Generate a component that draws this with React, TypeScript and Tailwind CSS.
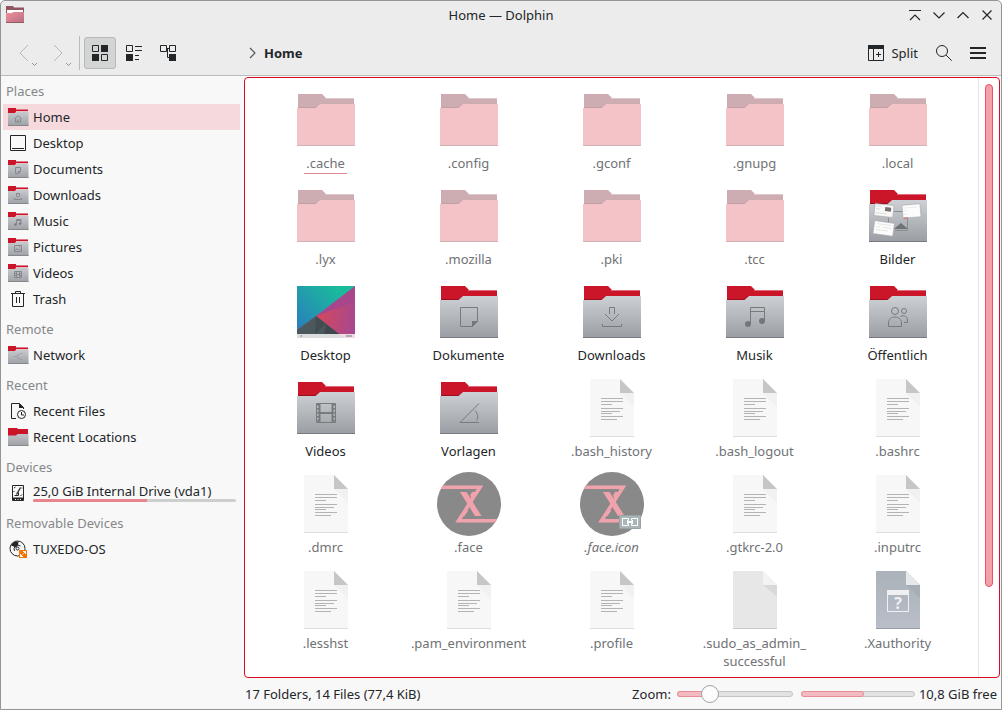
import { useState } from 'react';
import type { ReactNode } from 'react';
import clsx from 'clsx';

type Glyph =
  | 'home'
  | 'document'
  | 'download'
  | 'music'
  | 'picture'
  | 'video'
  | 'network'
  | 'people'
  | 'template';

interface Place {
  name: string;
  icon: ReactNode;
  usage?: number;
}

interface PlaceGroup {
  title: string;
  places: Place[];
}

interface Entry {
  name: string;
  icon: ReactNode;
  hidden?: boolean;
  link?: boolean;
  current?: boolean;
}

/* ---------- sidebar icons (22px) ---------- */

const smallGlyphs: Partial<Record<Glyph, ReactNode>> = {
  home: <path d="M7.5 13 11 9.500l3.500 3.500M8.500 12.500v3.500h5v-3.500M11 16v-2.500" />,
  document: <path d="M8.500 9.500h5v4l-2 2h-3zM13.500 13.500h-2v2" />,
  download: <path d="M9.500 9.500h3v2.500l-1.500 1.500L9.500 12zM7.500 14v1.500h7V14" />,
  music: (
    <>
      <path d="M9.500 14.500v-5h4.500v4" />
      <path d="M9.500 10.500H14" />
      <circle cx="8.500" cy="14.500" r="1" fill="#74787b" />
      <circle cx="13" cy="13.500" r="1" fill="#74787b" />
    </>
  ),
  picture: <path d="M7.500 9.500h7v6h-7zM8 14.500l2-2 1.500 1.500 1-1 2 2M12 11h1" />,
  video: <path d="M7.500 9.500h7v6h-7zM9.500 9.500v6M12.500 9.500v6M9.500 12.500h3M7.500 11.500h2M7.500 13.500h2M12.500 11.500h2M12.500 13.500h2" />,
  network: (
    <>
      <path d="M13.500 9.500h1M13.500 15.500h1M7.500 12.500h1" />
      <path d="M9.500 12l3-2M9.500 13l3 2" strokeWidth=".6" />
    </>
  ),
};

function SmallFolder({ glyph }: { glyph?: Glyph }) {
  return (
    <svg width="22" height="22" viewBox="0 0 22 22" fill="none">
      <defs>
        <linearGradient id="smallBody" x1="0" y1="6" x2="0" y2="20" gradientUnits="userSpaceOnUse">
          <stop stopColor="#c6c9cd" />
          <stop offset="1" stopColor="#9da0a5" />
        </linearGradient>
      </defs>
      {glyph ? (
        <>
          <path d="M1 2h8v1h12v3H9l-1 1H1z" fill="#cc1428" />
          <path d="M9 3.500h12" stroke="#e0798a" />
          <path d="M9 5.500h12" stroke="#e4c3c8" />
          <path d="M1 7h7.500l1-1h12v14H1z" fill="url(#smallBody)" />
        </>
      ) : (
        <>
          <path d="M1 2h9l1 1h10v7H1z" fill="#cc1428" />
          <path d="M1 9.500h8l1.500-1.500h11v12H1z" fill="url(#smallBody)" />
        </>
      )}
      <path d="M1 19.500h20.500" stroke="#85888b" />
      {glyph && <g stroke="#85898c">{smallGlyphs[glyph]}</g>}
    </svg>
  );
}

const DesktopSmall = () => (
  <svg width="22" height="22" viewBox="0 0 22 22" fill="none" stroke="#232629">
    <path d="M3.500 3.500h15v15h-15zM5 16.500h12" />
  </svg>
);

const TrashSmall = () => (
  <svg width="22" height="22" viewBox="0 0 22 22" fill="none" stroke="#232629">
    <path d="M4 5.500h14M8.500 5V3.500h5V5M5.500 6v12.500h11V6M9.500 9v6M12.500 9v6" />
  </svg>
);

const RecentFilesSmall = () => (
  <svg width="22" height="22" viewBox="0 0 22 22" fill="none" stroke="#232629">
    <path d="M9 18.500H4.500v-15h8l4 4V9" />
    <path d="M12 3v5h5z" fill="#232629" stroke="none" />
    <circle cx="14.500" cy="14.500" r="4" />
    <path d="M14.500 12v3H17" />
  </svg>
);

const DriveSmall = () => (
  <svg width="22" height="22" viewBox="0 0 22 22" fill="none" stroke="#232629">
    <path d="M5.500 3.500h11v15h-11z" />
    <path d="M6 15.500h10v3H6z" fill="#232629" stroke="none" />
    <path d="M8 17.500h1M10.500 17.500h1M13 17.500h1" stroke="#f8f8f8" />
    <path d="M13.500 5.500 9.500 12.500" strokeWidth="1.300" />
    <path d="M7.500 13.500h4v-3" />
    <path d="M7 6 8.500 5M15 12.500 13.500 14M15 5.500v1M7 9v1" />
  </svg>
);

const DiscSmall = () => (
  <svg width="22" height="22" viewBox="0 0 22 22" fill="none">
    <circle cx="10.500" cy="10.500" r="7.500" stroke="#232629" />
    <path d="M9 9.500 4 7.500A7.500 7.500 0 0 1 11.500 3.500L11 7z" fill="#232629" />
    <path d="M7.500 13a4 4 0 0 1 6-5" stroke="#232629" />
    <circle cx="10.500" cy="10.500" r="1.500" fill="#f8f8f8" stroke="#232629" />
    <path d="M12 12h8v8h-8z" fill="#f67400" />
    <path d="M16 13.500h2.500V16M13.500 16v2.500H16" stroke="#fff" />
    <path d="m16.500 15.500 2-2M13.500 18.500l2-2" stroke="#fff" />
  </svg>
);

/* ---------- file view icons (64px) ---------- */

const glyphs: Partial<Record<Glyph, ReactNode>> = {
  document: (
    <>
      <path d="M23.500 27.500h17v14l-5 5h-12z" />
      <path d="M35 41h6l-6 6z" fill="#74787a" stroke="none" />
    </>
  ),
  download: (
    <>
      <path d="M29.500 34v-6.500h5V34M25 34l7 7 7-7" />
      <path d="M22.500 44v2.500h19V44" />
    </>
  ),
  music: (
    <>
      <path d="M27.500 44V27.500h14V42M27.500 31.500h14" />
      <circle cx="25" cy="44" r="3" fill="#74787a" stroke="none" />
      <circle cx="39" cy="41" r="3" fill="#74787a" stroke="none" />
    </>
  ),
  people: (
    <>
      <circle cx="29" cy="31" r="3.500" />
      <path d="M22.500 46.500V43c0-4 3-6 6.500-6s6.500 2 6.500 6v3.500z" />
      <circle cx="38" cy="31" r="2.500" />
      <path d="M34.500 36.500c4-2 7 .5 7 3.500v2.500H38" />
    </>
  ),
  video: (
    <>
      <path d="M22.500 27.500h19v19h-19z" />
      <path d="M25.500 28v19M38.500 28v19M26 37h12" strokeWidth="2" />
      <path d="M24 28v19M40 28v19" strokeWidth="3" strokeDasharray="1.500 2.500" />
    </>
  ),
  template: <path d="M42 27.500 23 46.500h19M38 34.500c3 3 3.500 7 1.500 10" />,
};

function FolderShape({ children }: { children?: ReactNode }) {
  return (
    <svg width="64" height="64" viewBox="0 0 64 64" fill="none">
      <defs>
        <linearGradient id="folderBody" x1="0" y1="16" x2="0" y2="58" gradientUnits="userSpaceOnUse">
          <stop stopColor="#cdd0d4" />
          <stop offset="1" stopColor="#9a9da3" />
        </linearGradient>
      </defs>
      <path d="M4 6h24l4 4h28v12H4z" fill="#cb1528" />
      <path d="M31 10.500h29" stroke="#e0697a" />
      <path d="M4 19.500h18l4-4" stroke="#9c0d1c" />
      <path d="M3 20h18.500l4.500-4H61v42H3z" fill="url(#folderBody)" />
      <path d="M3 57.500h58" stroke="#777a7e" />
      {children}
    </svg>
  );
}

const Folder = ({ glyph }: { glyph: Glyph }) => (
  <FolderShape>
    <g stroke="#777b7d">{glyphs[glyph]}</g>
  </FolderShape>
);

const HiddenFolder = () => (
  <svg width="64" height="64" viewBox="0 0 64 64" fill="none">
    <path d="M4 6h24l4 4h28v12H4z" fill="#cdadb1" />
    <path d="M31 10.500h29" stroke="#dfc6c9" />
    <path d="M4 19.500h18l4-4" stroke="#bf9fa3" />
    <path d="M3 20h18.500l4.500-4H61v42H3z" fill="#f4c3c8" />
    <path d="M3 57.500h58" stroke="#d3b2b6" />
  </svg>
);

const PicturesFolder = () => (
  <FolderShape>
    <path d="M28 27.500h14M22.500 34v6M41.500 34v12.500H29" stroke="#8a8d90" />
    <path d="m28 45 7-6 7 6z" fill="#6f7375" />
    <g transform="rotate(6 18 26)">
      <path d="M8.500 20.500h19v12h-19z" fill="#f8f8f8" stroke="#a5a7aa" strokeWidth=".6" />
      <path d="M10 22.500h5M10 25.500h4M10 29.500h11" stroke="#dcdcdc" />
      <path d="M19 23h6v4h-6z" fill="#77716d" />
    </g>
    <g transform="rotate(-5 45 27)">
      <path d="M36.500 20.500h18v13h-18z" fill="#fcfcfc" stroke="#a5a7aa" strokeWidth=".6" />
      <path d="M38 23.500h13M38 26.500h3M38 29.500h3" stroke="#eeeaeb" />
      <path d="M37 33.500h4" stroke="#d55" />
    </g>
    <g transform="rotate(8 18 46)">
      <path d="M7.500 38h20v13h-20z" fill="#fcfcfc" stroke="#a5a7aa" strokeWidth=".6" />
      <path d="M10 40.500h14M10 43.500h4M17 43.500h8M10 46.500h12" stroke="#e6e6e6" />
    </g>
  </FolderShape>
);

const DesktopPreview = () => (
  <svg width="64" height="64" viewBox="0 0 64 64">
    <defs>
      <linearGradient id="wallBlue" x1="3" y1="50" x2="50" y2="6" gradientUnits="userSpaceOnUse">
        <stop stopColor="#2a7dbd" />
        <stop offset=".9" stopColor="#1abb9c" />
      </linearGradient>
      <linearGradient id="wallRed" x1="22" y1="36" x2="61" y2="42" gradientUnits="userSpaceOnUse">
        <stop stopColor="#d4485a" />
        <stop offset="1" stopColor="#a84890" />
      </linearGradient>
    </defs>
    <path d="M3 6h58v52H3z" fill="#a8468b" />
    <path d="M3 6h58L22 36 3 50z" fill="url(#wallBlue)" />
    <path d="M22 36 61 22v36H50z" fill="url(#wallRed)" />
    <path d="M3 50 22 36l28 22H3z" fill="#4b585c" />
    <path d="m22 36 10 8-11 10z" fill="#424d51" />
    <path d="m32 44 13 10H30z" fill="#3f494d" />
    <path d="M3 54h58v4H3z" fill="#fff" fillOpacity=".8" />
    <path d="M6.500 56h1.500M52 56h6" stroke="#777" />
  </svg>
);

const TextFile = () => (
  <svg width="64" height="64" viewBox="0 0 64 64" fill="none">
    <path d="M10 3h30l14 14v44H10z" fill="#f7f7f7" />
    <path d="M40 17h14v14z" fill="#f1f1f1" />
    <path d="M40 3v14h14z" fill="#c6c6c6" />
    <path d="M10 60.500h44" stroke="#dedede" />
    <path
      d="M21 22.500h22M21 25.500h22M21 28.500h11M21 32.500h22M21 35.500h19M21 37.500h11M21 40.500h22M21 43.500h16"
      stroke="#b4b4b4"
    />
  </svg>
);

const BlankFile = () => (
  <svg width="64" height="64" viewBox="0 0 64 64" fill="none">
    <path d="M10 3h30l14 14v44H10z" fill="#e7e7e7" />
    <path d="M40 17h14v12z" fill="#d9d9d9" />
    <path d="M40 3v14h14z" fill="#f3f3f3" />
    <path d="M10 60.500h44" stroke="#c9c9c9" />
  </svg>
);

const UnknownFile = () => (
  <svg width="64" height="64" viewBox="0 0 64 64" fill="none">
    <defs>
      <linearGradient id="unknownBody" x1="0" y1="3" x2="0" y2="61" gradientUnits="userSpaceOnUse">
        <stop stopColor="#abb2b9" />
        <stop offset="1" stopColor="#b9bec8" />
      </linearGradient>
    </defs>
    <path d="M10 3h30l14 14v44H10z" fill="url(#unknownBody)" />
    <path d="M40 17h14v13z" fill="#a6adb5" />
    <path d="M40 3v14h14z" fill="#e6e8ea" />
    <path d="M10 60.500h44" stroke="#989da5" />
    <path d="M21.500 22.500h21v21h-21z" stroke="#eff0f2" />
    <path d="M21 22h22v5H21z" fill="#eff0f2" />
    <text x="32" y="41" textAnchor="middle" fontSize="16" fontWeight="700" fill="#eff0f2">
      ?
    </text>
  </svg>
);

function FaceIcon({ link }: { link?: boolean }) {
  const clip = link ? 'faceLinkClip' : 'faceClip';
  return (
    <svg width="64" height="64" viewBox="0 0 64 64" fill="none">
      <clipPath id={clip}>
        <circle cx="32" cy="32" r="32" />
      </clipPath>
      <circle cx="32" cy="32" r="32" fill="#898989" />
      <g clipPath={`url(#${clip})`}>
        <path d="M0 15.300h43L21.500 48.800h43" stroke="#f0a3ac" strokeWidth="3.600" />
        <path d="M23 20h6.500L44.500 44H38z" fill="#f0a3ac" />
        <path d="M35 20h3.500l-4 6.500-1.500-3zM29.500 36l1.500 3-3.500 5H24z" fill="#f0a3ac" />
      </g>
      {link && (
        <>
          <path d="M39.500 43.500h21v13h-21z" fill="#aab5b7" stroke="#97a3a6" />
          <path d="M48.500 48.500v-2h-6v7h6v-2M51.500 48.500v-2h6v7h-6v-2" stroke="#fff" />
          <path d="M47 50h6" stroke="#fff" strokeWidth="2" />
          <path d="M47.500 48v4M52.500 48v4" stroke="#fff" />
        </>
      )}
    </svg>
  );
}

/* ---------- data ---------- */

const placeGroups: PlaceGroup[] = [
  {
    title: 'Places',
    places: [
      { name: 'Home', icon: <SmallFolder glyph="home" /> },
      { name: 'Desktop', icon: <DesktopSmall /> },
      { name: 'Documents', icon: <SmallFolder glyph="document" /> },
      { name: 'Downloads', icon: <SmallFolder glyph="download" /> },
      { name: 'Music', icon: <SmallFolder glyph="music" /> },
      { name: 'Pictures', icon: <SmallFolder glyph="picture" /> },
      { name: 'Videos', icon: <SmallFolder glyph="video" /> },
      { name: 'Trash', icon: <TrashSmall /> },
    ],
  },
  { title: 'Remote', places: [{ name: 'Network', icon: <SmallFolder glyph="network" /> }] },
  {
    title: 'Recent',
    places: [
      { name: 'Recent Files', icon: <RecentFilesSmall /> },
      { name: 'Recent Locations', icon: <SmallFolder /> },
    ],
  },
  { title: 'Devices', places: [{ name: '25,0 GiB Internal Drive (vda1)', icon: <DriveSmall />, usage: 56 }] },
  { title: 'Removable Devices', places: [{ name: 'TUXEDO-OS', icon: <DiscSmall /> }] },
];

const entries: Entry[] = [
  { name: '.cache', icon: <HiddenFolder />, hidden: true, current: true },
  { name: '.config', icon: <HiddenFolder />, hidden: true },
  { name: '.gconf', icon: <HiddenFolder />, hidden: true },
  { name: '.gnupg', icon: <HiddenFolder />, hidden: true },
  { name: '.local', icon: <HiddenFolder />, hidden: true },
  { name: '.lyx', icon: <HiddenFolder />, hidden: true },
  { name: '.mozilla', icon: <HiddenFolder />, hidden: true },
  { name: '.pki', icon: <HiddenFolder />, hidden: true },
  { name: '.tcc', icon: <HiddenFolder />, hidden: true },
  { name: 'Bilder', icon: <PicturesFolder /> },
  { name: 'Desktop', icon: <DesktopPreview /> },
  { name: 'Dokumente', icon: <Folder glyph="document" /> },
  { name: 'Downloads', icon: <Folder glyph="download" /> },
  { name: 'Musik', icon: <Folder glyph="music" /> },
  { name: 'Öffentlich', icon: <Folder glyph="people" /> },
  { name: 'Videos', icon: <Folder glyph="video" /> },
  { name: 'Vorlagen', icon: <Folder glyph="template" /> },
  { name: '.bash_history', icon: <TextFile />, hidden: true },
  { name: '.bash_logout', icon: <TextFile />, hidden: true },
  { name: '.bashrc', icon: <TextFile />, hidden: true },
  { name: '.dmrc', icon: <TextFile />, hidden: true },
  { name: '.face', icon: <FaceIcon />, hidden: true },
  { name: '.face.icon', icon: <FaceIcon link />, hidden: true, link: true },
  { name: '.gtkrc-2.0', icon: <TextFile />, hidden: true },
  { name: '.inputrc', icon: <TextFile />, hidden: true },
  { name: '.lesshst', icon: <TextFile />, hidden: true },
  { name: '.pam_environment', icon: <TextFile />, hidden: true },
  { name: '.profile', icon: <TextFile />, hidden: true },
  { name: '.sudo_as_admin_successful', icon: <BlankFile />, hidden: true },
  { name: '.Xauthority', icon: <UnknownFile />, hidden: true },
];

/* ---------- window parts ---------- */

const windowButtons = [
  { label: 'Keep above', path: 'M1 2.500h12M2 12l5-5 5 5' },
  { label: 'Minimize', path: 'm1.500 4.500 5.500 5.500 5.500-5.500' },
  { label: 'Maximize', path: 'm1.500 10 5.500-5.500 5.500 5.500' },
  { label: 'Close', path: 'm2.500 2.500 9 9m0-9-9 9' },
];

function TitleBar() {
  return (
    <header className="grid h-7 grid-cols-[1fr_auto_1fr] items-center">
      <svg width="20" height="20" viewBox="0 0 20 20" className="ml-1">
        <defs>
          <linearGradient id="appBody" x1="0" y1="0" x2="1" y2="1">
            <stop stopColor="#ee939d" />
            <stop offset="1" stopColor="#b66d82" />
          </linearGradient>
        </defs>
        <path d="M1 1h7l1 1.500h10V10H1z" fill="#93555f" />
        <path d="M2 5h16v3H2z" fill="#fff" />
        <path d="M1 8h6l1-1h11v11H1z" fill="url(#appBody)" />
        <path d="M1 17h18v1H1z" fill="#9b5965" />
      </svg>
      <h1>Home — Dolphin</h1>
      <div className="flex justify-end gap-2.5 pr-[7px]">
        {windowButtons.map((button) => (
          <button key={button.label} type="button" aria-label={button.label}>
            <svg width="14" height="14" viewBox="0 0 14 14" fill="none" stroke="#232629" strokeWidth="1.200">
              <path d={button.path} />
            </svg>
          </button>
        ))}
      </div>
    </header>
  );
}

const viewModes = [
  {
    label: 'Icons',
    icon: (
      <>
        <path d="M.5.5h6v6h-6zM9.500 9.500h6v6h-6z" />
        <path d="M9 0h7v7H9zM0 9h7v7H0z" fill="#232629" stroke="none" />
      </>
    ),
  },
  {
    label: 'Compact',
    icon: (
      <>
        <path d="M.5.5h6v6h-6zM9 1.500h7M9 5.500h7M9 10.500h4M9 14.500h4" />
        <path d="M0 9h7v7H0z" fill="#232629" stroke="none" />
      </>
    ),
  },
  {
    label: 'Details',
    icon: (
      <>
        <path d="M.5.5h6v6h-6zM9.500.5h6v6h-6zM7 3.500h2M7.500 3.500v9H9" />
        <path d="M9 9h7v7H9z" fill="#232629" stroke="none" />
      </>
    ),
  },
];

function Toolbar() {
  const [mode, setMode] = useState('Icons');

  return (
    <div className="flex h-[47px] items-center gap-0.5 border-b border-[#b9bbbc] px-[7px] pt-0.5">
      <button type="button" aria-label="Back" disabled>
        <svg width="32" height="32" viewBox="0 0 32 32" fill="none" stroke="#b6b8b9">
          <path d="m20 8-8 8 8 8" />
          <path d="m24 26 2.500 2.500L29 26" stroke="#929495" />
        </svg>
      </button>
      <button type="button" aria-label="Forward" disabled>
        <svg width="32" height="32" viewBox="0 0 32 32" fill="none" stroke="#b6b8b9">
          <path d="m12 8 8 8-8 8" />
          <path d="m24 26 2.500 2.500L29 26" stroke="#929495" />
        </svg>
      </button>
      <div className="mr-0.5 ml-[3px] h-[34px] w-px bg-[#b9bbbc]" />
      {viewModes.map((view) => (
        <button
          key={view.label}
          type="button"
          aria-label={view.label}
          aria-pressed={mode === view.label}
          onClick={() => setMode(view.label)}
          className={clsx(
            'flex size-8 items-center justify-center rounded-[3px] border',
            mode === view.label ? 'border-[#b7b9b9] bg-[#d3d5d4]' : 'border-transparent',
          )}
        >
          <svg width="16" height="16" viewBox="0 0 16 16" fill="none" stroke="#232629">
            {view.icon}
          </svg>
        </button>
      ))}
      <nav aria-label="Location" className="ml-[60px] flex items-center gap-1">
        <svg width="14" height="14" viewBox="0 0 14 14" fill="none" stroke="#55585a" strokeWidth="1.200">
          <path d="m4 2 5 5-5 5" />
        </svg>
        <a href="#home" className="font-bold">
          Home
        </a>
      </nav>
      <button type="button" className="ml-auto flex h-8 items-center gap-[7px] px-2">
        <svg width="16" height="16" viewBox="0 0 16 16" fill="none" stroke="#232629">
          <path d="M.5.5h15v15H.5zM5.500 3v13M8 9.500h5M10.500 7v5" />
          <path d="M0 0h16v4H0z" fill="#232629" stroke="none" />
        </svg>
        Split
      </button>
      <button type="button" aria-label="Search" className="flex size-8 items-center justify-center">
        <svg width="16" height="16" viewBox="0 0 16 16" fill="none" stroke="#232629">
          <circle cx="6" cy="6" r="5.500" />
          <path d="m10 10 5.700 5.700" />
        </svg>
      </button>
      <button type="button" aria-label="Open menu" className="flex size-8 items-center justify-center">
        <svg width="16" height="16" viewBox="0 0 16 16" stroke="#232629" strokeWidth="2">
          <path d="M0 3h16M0 8h16M0 13h16" />
        </svg>
      </button>
    </div>
  );
}

function PlacesPanel() {
  return (
    <nav aria-label="Places" className="w-[243px] shrink-0 overflow-hidden pt-0.5 pr-1 pl-0.5">
      {placeGroups.map((group) => (
        <section key={group.title} className="not-first:mt-1">
          <h2 className="h-[26px] pl-[3px] leading-[26px] text-[#85888a]">{group.title}</h2>
          <ul>
            {group.places.map((place) => (
              <li key={place.name}>
                <a
                  href={`#${place.name}`}
                  className={clsx(
                    'flex h-[26px] items-center gap-1 px-1',
                    place.name === 'Home' && 'bg-[#f6d9dd]',
                  )}
                >
                  {place.icon}
                  {place.usage === undefined ? (
                    place.name
                  ) : (
                    <span className="flex flex-1 flex-col pb-0.5">
                      <span className="leading-4">{place.name}</span>
                      <span className="h-[3px] rounded-sm bg-[#cdcfcf]">
                        <span className="block h-full rounded-l-sm bg-[#e9858f]" style={{ width: `${place.usage}%` }} />
                      </span>
                    </span>
                  )}
                </a>
              </li>
            ))}
          </ul>
        </section>
      ))}
    </nav>
  );
}

// File names may wrap after an underscore.
const breakable = (name: string) => name.replaceAll('_', '_\u200b');

function FileView() {
  return (
    <main className="mt-px mr-px flex min-w-0 flex-1 overflow-hidden rounded-[4px] border border-[#dc0a20] bg-white">
      <ul className="grid flex-1 grid-cols-[repeat(auto-fill,143px)] content-start justify-center gap-y-3 overflow-hidden pt-2.5">
        {entries.map((entry) => (
          <li key={entry.name} className="h-[84px]">
            <button type="button" className="flex w-full flex-col items-center gap-0.5">
              {entry.icon}
              <span
                className={clsx(
                  'max-w-[120px] px-0.5 leading-[18px]',
                  entry.hidden && 'text-[#707274]',
                  entry.link && 'italic',
                  entry.current && 'border-b border-[#e08b95] pb-px',
                )}
              >
                {breakable(entry.name)}
              </span>
            </button>
          </li>
        ))}
      </ul>
      <div className="w-[21px] border-l border-[#e4e5e5] py-1.5 pl-1.5">
        <div className="h-[503px] max-h-full w-2 rounded-full border border-[#ec5062] bg-[#f2a1aa]" />
      </div>
    </main>
  );
}

function Track({ value, className }: { value: number; className?: string }) {
  return (
    <div className={clsx('h-1.5 rounded-full border border-[#c4c5c5] bg-[#e2e2e2]', className)}>
      <div
        className="-mt-px -ml-px h-1.5 rounded-full border border-[#e88c96] bg-[#f3bbc1]"
        style={{ width: `${value}%` }}
      />
    </div>
  );
}

function StatusBar() {
  const [zoom, setZoom] = useState(4);

  return (
    <footer className="flex h-[31px] shrink-0 items-center pr-1 pl-[244px]">
      <span className="mr-auto">17 Folders, 14 Files (77,4 KiB)</span>
      <label htmlFor="zoom" className="mr-1.5">
        Zoom:
      </label>
      <div className="relative mr-2 w-[116px]">
        <Track value={(zoom / 16) * 84 + 8} />
        <input
          id="zoom"
          type="range"
          min={0}
          max={16}
          value={zoom}
          onChange={(event) => setZoom(Number(event.target.value))}
          className="absolute inset-x-0 -top-1.5 h-[18px] w-full appearance-none bg-transparent [&::-webkit-slider-thumb]:size-[18px] [&::-webkit-slider-thumb]:appearance-none [&::-webkit-slider-thumb]:rounded-full [&::-webkit-slider-thumb]:border [&::-webkit-slider-thumb]:border-[#a3a5a6] [&::-webkit-slider-thumb]:bg-[#fcfcfc]"
        />
      </div>
      <Track value={56} className="mr-1 w-[114px]" />
      <span>10,8 GiB free</span>
    </footer>
  );
}

export default function App() {
  return (
    <div className="flex h-screen flex-col overflow-hidden rounded-t-[5px] border border-[#949596] bg-[#ececec] font-['Noto_Sans',sans-serif] text-[13px] leading-[18px] text-[#232629]">
      <TitleBar />
      <Toolbar />
      <div className="flex min-h-0 flex-1 flex-col bg-[#f8f8f8]">
        <div className="flex min-h-0 flex-1">
          <PlacesPanel />
          <FileView />
        </div>
        <StatusBar />
      </div>
    </div>
  );
}
